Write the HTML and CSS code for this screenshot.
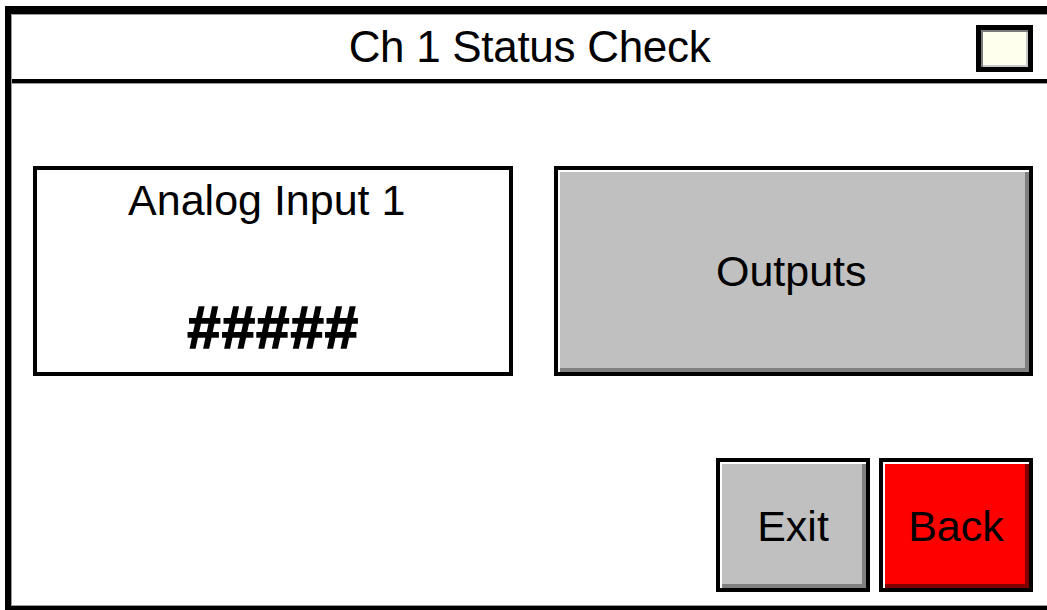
FILE: index.html
```html
<!DOCTYPE html>
<html>
<head>
<meta charset="utf-8">
<link rel="stylesheet" href="styles.css">
</head>
<body>
<div class="screen">
  <div class="inner">
    <header class="header">
      <div class="spacer"></div>
      <h1 class="title">Ch 1 Status Check</h1>
      <div class="indicator"></div>
    </header>
    <main class="content">
      <div class="row">
        <div class="readout">
          <div class="readout-label">Analog Input 1</div>
          <div class="readout-value">#####</div>
        </div>
        <div class="btn btn-grey btn-large">Outputs</div>
      </div>
      <div class="actions">
        <div class="btn btn-grey btn-small">Exit</div>
        <div class="btn btn-red btn-small">Back</div>
      </div>
    </main>
  </div>
</div>
</body>
</html>
```

FILE: styles.css
```css
* { box-sizing: border-box; margin: 0; padding: 0; }

html, body {
  width: 1047px;
  height: 610px;
  overflow: hidden;
  background: #ffffff;
}

body {
  font-family: "Liberation Sans", Arial, sans-serif;
  color: #000;
}

.screen {
  margin-left: 5px;
  margin-top: 6px;
  width: 1042px;
  height: 604px;
  border-top: 8px solid #000;
  border-left: 6px solid #000;
  border-bottom: 4px solid #000;
}

.inner {
  height: 100%;
  border-top: 1px solid #9a9a9a;
  border-left: 1px solid #9a9a9a;
  border-bottom: 1px solid #9a9a9a;
  display: flex;
  flex-direction: column;
}

.header {
  height: 68px;
  display: grid;
  grid-template-columns: 1fr auto 1fr;
  align-items: center;
  border-bottom: 4px solid #000;
  box-shadow: 0 1px 0 #9a9a9a;
  padding-right: 14px;
  padding-top: 0;
}

.title {
  font-weight: normal;
  font-size: 44px;
  line-height: 1;
  text-align: center;
  padding-left: 14px;
  letter-spacing: -0.3px;
}

.indicator {
  justify-self: end;
  width: 57px;
  height: 47px;
  margin-top: 2px;
  border: 5px solid #000;
  background: #ffffee;
  box-shadow: inset 2px 2px 0 #7a7a7a, inset -2px -2px 0 #c8c8c8;
}

.content {
  flex: 1;
  display: flex;
  flex-direction: column;
  padding: 83px 14px 13px 21px;
}

.row {
  display: flex;
  gap: 41px;
  height: 210px;
}

.readout {
  width: 480px;
  border: 4px solid #000;
  display: flex;
  flex-direction: column;
  align-items: center;
  padding-top: 6px;
}

.readout-label {
  font-size: 43px;
  line-height: 1.15;
  padding-right: 12px;
}

.readout-value {
  margin-top: 73px;
  font-size: 60px;
  font-weight: bold;
  letter-spacing: 1px;
  padding-left: 1px;
  line-height: 1;
  -webkit-text-stroke: 1.5px #000;
}

.btn {
  border: 4px solid #000;
  display: flex;
  align-items: center;
  justify-content: center;
  font-size: 43px;
}

.btn-grey {
  background: #c0c0c0;
  box-shadow: inset 2px 2px 0 #ffffff, inset -4px -4px 0 #808080;
}

.btn-red {
  background: #ff0000;
  box-shadow: inset 2px 2px 0 #ffffff, inset -4px -4px 0 #800000;
}

.btn-large {
  width: 480px;
  padding-right: 4px;
}

.actions {
  margin-top: auto;
  display: flex;
  justify-content: flex-end;
  gap: 9px;
}

.btn-small {
  width: 154px;
  height: 134px;
  padding-top: 2px;
}
```
